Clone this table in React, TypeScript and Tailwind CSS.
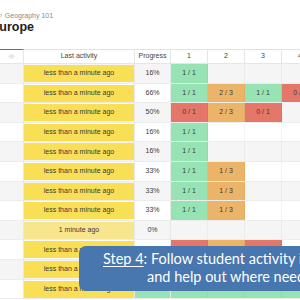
import React from "react";

type Cell = { c: "g" | "o" | "r"; t: string } | null;
type Row = { act: string; pale?: boolean; prog: string; progGreen?: boolean; cells: Cell[] };

const g = (t: string): Cell => ({ c: "g", t });
const o = (t: string): Cell => ({ c: "o", t });
const r = (t: string): Cell => ({ c: "r", t });

const L = "less than a minute ago";
const rows: Row[] = [
  { act: L, prog: "16%", cells: [g("1 / 1"), null, null, null] },
  { act: L, prog: "66%", cells: [g("1 / 1"), o("2 / 3"), g("1 / 1"), r("0 / 1")] },
  { act: L, prog: "50%", cells: [r("0 / 1"), o("2 / 3"), r("0 / 1"), null] },
  { act: L, prog: "16%", cells: [g("1 / 1"), null, null, null] },
  { act: L, prog: "16%", cells: [g("1 / 1"), null, null, null] },
  { act: L, prog: "33%", cells: [g("1 / 1"), o("1 / 3"), null, null] },
  { act: L, prog: "33%", cells: [g("1 / 1"), o("1 / 3"), null, null] },
  { act: L, prog: "33%", cells: [g("1 / 1"), o("1 / 3"), null, null] },
  { act: "1 minute ago", pale: true, prog: "0%", cells: [null, null, null, null] },
  { act: L, prog: "50%", cells: [r("0 / 1"), o("2 / 3"), r("0 / 1"), null] },
  { act: L, prog: "66%", cells: [g("1 / 1"), o("2 / 3"), g("1 / 1"), null] },
  { act: L, prog: "100%", progGreen: true, cells: [g("1 / 1"), g("3 / 3"), g("1 / 1"), g("1 / 1")] },
];

function cellBg(c: Cell) {
  if (!c) return "";
  if (c.c === "g") return "bg-[#97e3b4]";
  if (c.c === "o") return "bg-[#ebb468]";
  return "bg-[#e5766a]";
}

export default function App() {
  return (
    <div
      className="relative w-[300px] h-[300px] overflow-hidden bg-white text-[#333]"
      style={{ fontFamily: '"Liberation Sans", Arial, sans-serif' }}
    >
      <div className="h-[49px] pt-[12px]">
        <div className="flex items-center gap-[2.5px] text-[7px] leading-[8px] text-[#8a8a8a]">
          <span className="text-[#9a9a9a]">›</span>
          <span>Geography 101</span>
        </div>
        <div className="-ml-[9px] text-[12.5px] leading-[14px] font-bold text-[#222]">Europe</div>
      </div>

      {/* header */}
      <div className="flex h-[15px] text-[7px] text-[#444]">
        <div className="w-[24px] shrink-0 border-t border-t-[#6f6f6f] border-r border-r-[#e6e6e6] border-b border-b-[#e6e6e6] flex items-center justify-center">
          <svg width="7" height="5" viewBox="0 0 14 10">
            <path d="M1 5 Q7 -2 13 5 Q7 12 1 5 Z" fill="none" stroke="#d2d2d2" strokeWidth="1.4" />
            <circle cx="7" cy="5" r="2" fill="#d2d2d2" />
          </svg>
        </div>
        <div className="w-[111px] shrink-0 border-t border-t-[#e2e2e2] border-r border-r-[#e6e6e6] border-b border-b-[#e6e6e6] flex items-center justify-center">
          Last activity
        </div>
        <div className="w-[36px] shrink-0 border-t border-t-[#e2e2e2] border-r border-r-[#e6e6e6] border-b border-b-[#e6e6e6] flex items-center justify-center">
          Progress
        </div>
        {["1", "2", "3", "4"].map((h) => (
          <div
            key={h}
            className="w-[37px] shrink-0 border-t border-t-[#e2e2e2] border-r border-r-[#e6e6e6] border-b border-b-[#e6e6e6] flex items-center justify-center"
          >
            {h}
          </div>
        ))}
      </div>

      {rows.map((row, i) => (
        <div
          key={i}
          className={`flex h-[19.6px] border-b border-[#ececec] text-[7px] text-[#3a3a3a] ${
            i % 2 === 0 ? "bg-[#f5f5f5]" : "bg-white"
          }`}
        >
          <div className="w-[24px] shrink-0 border-r border-[#e8e8e8]" />
          <div className="w-[111px] shrink-0 border-r border-[#e8e8e8] flex">
            <div
              className={`flex-1 mt-[1px] mb-[0.5px] flex items-center justify-center ${
                row.pale ? "bg-[#f8e68e]" : "bg-[#f9df56]"
              }`}
            >
              {row.act}
            </div>
          </div>
          <div
            className={`w-[36px] shrink-0 border-r border-[#e8e8e8] flex items-center justify-center ${
              row.progGreen ? "bg-[#97e3b4]" : ""
            }`}
          >
            {row.prog}
          </div>
          {row.cells.map((c, j) => (
            <div
              key={j}
              className={`w-[37px] shrink-0 border-r border-black/[0.04] flex items-center justify-center ${cellBg(c)}`}
            >
              {c ? c.t : ""}
            </div>
          ))}
        </div>
      ))}

      {/* banner */}
      <div
        className="absolute left-[79px] top-[246px] w-[260px] h-[45px] rounded-[7px] bg-[#4876ae] text-white text-[14.5px] leading-[18px] pt-[4px] whitespace-nowrap"
        style={{ fontFamily: 'Lato, "Open Sans", sans-serif' }}
      >
        <div className="pl-[24px]">
          <span className="underline decoration-1 underline-offset-2">Step 4</span>: Follow student activity in real-time
        </div>
        <div className="pl-[68px]">and help out where needed.</div>
      </div>
    </div>
  );
}
